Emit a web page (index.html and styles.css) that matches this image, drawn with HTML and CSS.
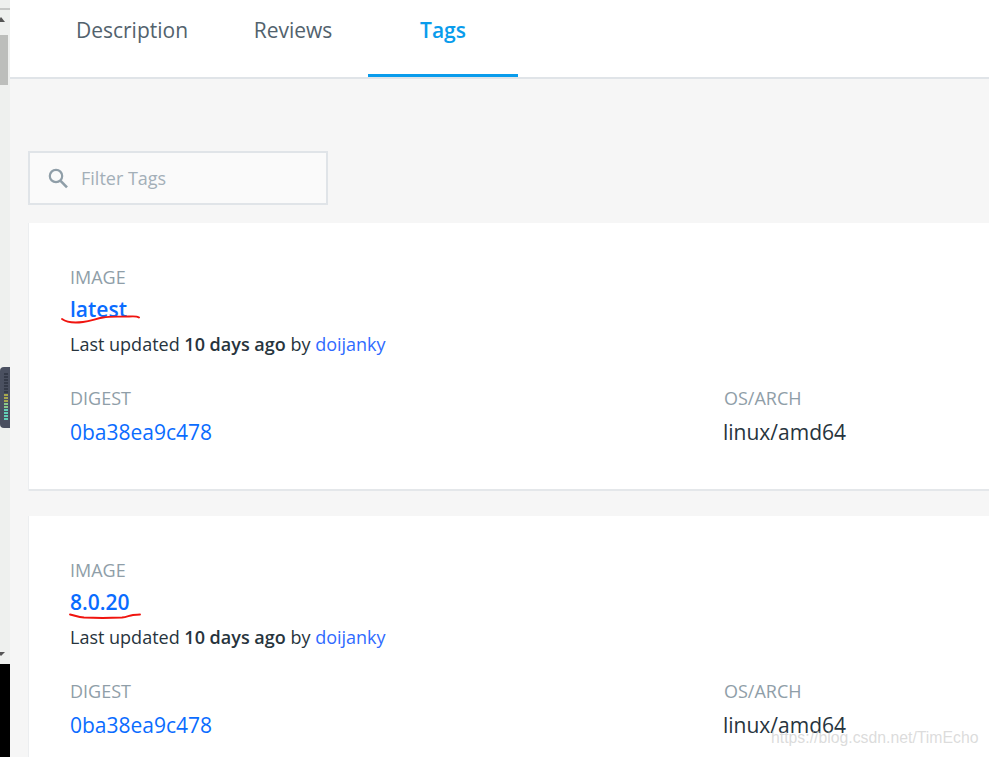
FILE: index.html
```html
<!DOCTYPE html>
<html lang="en">
<head>
<meta charset="utf-8">
<title>Tags</title>
<link rel="stylesheet" href="styles.css">
</head>
<body>
<div class="page">
  <aside class="gutter">
    <div class="track">
      <span class="arrow-up"></span>
      <span class="thumb"></span>
      <span class="arrow-down"></span>
    </div>
    <div class="black"></div>
    <div class="widget">
      <span class="bar off"></span><span class="bar off"></span><span class="bar off"></span><span class="bar off"></span><span class="bar off"></span><span class="bar off"></span><span class="bar off"></span><span class="bar y"></span><span class="bar y"></span><span class="bar y"></span><span class="bar g"></span><span class="bar g"></span><span class="bar t"></span><span class="bar t"></span><span class="bar t"></span><span class="bar t"></span>
    </div>
  </aside>
  <main class="main">
    <nav class="tabs">
      <a class="tab tab-first">Description</a>
      <a class="tab">Reviews</a>
      <a class="tab active">Tags</a>
    </nav>
    <section class="content">
      <div class="filter">
        <svg class="search" width="20" height="21" viewBox="0 0 20 21"><circle cx="8" cy="8" r="6.2" fill="none" stroke="#8f9ea8" stroke-width="2.2"/><path d="M12.6 12.8 L19 19.4" stroke="#8f9ea8" stroke-width="2.6" fill="none"/></svg>
        <span class="placeholder">Filter Tags</span>
      </div>
      <article class="card">
        <div class="label">IMAGE</div>
        <a class="tag">latest</a>
        <p class="meta">Last updated <b>10 days ago</b> by <a class="user">doijanky</a></p>
        <div class="details">
          <div>
            <div class="label">DIGEST</div>
            <a class="value link">0ba38ea9c478</a>
          </div>
          <div>
            <div class="label">OS/ARCH</div>
            <span class="value arch">linux/amd64</span>
          </div>
        </div>
        <svg class="scribble s1" width="82" height="16" viewBox="0 0 82 16"><path d="M1 9 C5 12 14 13 22 12 C30 11 34 9 42 7.500 C50 6 60 7 68 6.500 C72 6.200 76 6 78 7.500" fill="none" stroke="#f0140f" stroke-width="1.900" stroke-linecap="round"/></svg>
      </article>
      <article class="card">
        <div class="label">IMAGE</div>
        <a class="tag">8.0.20</a>
        <p class="meta">Last updated <b>10 days ago</b> by <a class="user">doijanky</a></p>
        <div class="details">
          <div>
            <div class="label">DIGEST</div>
            <a class="value link">0ba38ea9c478</a>
          </div>
          <div>
            <div class="label">OS/ARCH</div>
            <span class="value arch">linux/amd64</span>
          </div>
        </div>
        <svg class="scribble s2" width="74" height="10" viewBox="0 0 74 10"><path d="M1 2.500 C6 3.500 9 5 15 5.500 C25 6 42 6 53 5.500 C58 5 60 3.500 64 3 C67 2.700 69 2.500 71 2.500" fill="none" stroke="#f0140f" stroke-width="1.900" stroke-linecap="round"/></svg>
      </article>
    </section>
  </main>
</div>
<div class="watermark">https://blog.csdn.net/TimEcho</div>
</body>
</html>
```
FILE: styles.css
```css
* { box-sizing: border-box; }
html, body { margin: 0; height: 100%; overflow: hidden; }
body { font-family: "Open Sans", "Noto Sans", sans-serif; background: #f6f6f6; color: #27343d; }
.page { display: flex; height: 757px; position: relative; }

.gutter { width: 10px; flex: none; display: flex; flex-direction: column; background: #eef0ee; position: relative; }
.track { flex: none; height: 656px; margin-top: 8px; border-top: 2px solid #c6c8c6; display: flex; flex-direction: column; align-items: flex-start; }
.arrow-up { width: 0; height: 0; border: 4px solid transparent; border-top: 0; border-bottom: 5px solid #555; margin: 7px 0 0 -3px; }
.thumb { width: 8px; height: 50px; background: #bcbebb; margin-top: 13px; }
.arrow-down { width: 0; height: 0; border: 4px solid transparent; border-bottom: 0; border-top: 4px solid #555; margin: auto 0 8px -3px; }
.black { flex: 1; background: #000; }
.widget { position: absolute; left: 0; top: 367px; width: 10px; height: 61px; background: #4a5060; border-radius: 4px 0 0 4px; padding: 6px 2px 0 4px; display: flex; flex-direction: column; gap: 1px; }
.bar { height: 2px; flex: none; }
.bar.off { background: #343a48; }
.bar.y { background: #a8a84e; }
.bar.g { background: #8ac98a; }
.bar.t { background: #62d0b8; }

.main { flex: 1; min-width: 0; }
.tabs { display: flex; height: 79px; background: #fff; border-bottom: 2px solid #e0e4e8; padding-left: 47px; }
.tab { width: 150px; height: 77px; display: flex; align-items: center; justify-content: center; font-size: 21px; color: #52626d; padding-bottom: 17px; }
.tab-first { margin-right: 11px; }
.tab.active { color: #099cec; font-weight: 600; border-bottom: 3px solid #099cec; padding-bottom: 14px; }

.content { padding: 72px 0 0 18px; }
.filter { width: 300px; height: 54px; border: 2px solid #e0e4e8; background: #fafafa; display: flex; align-items: center; padding-left: 18px; gap: 13px; margin-bottom: 18px; }
.search { flex: none; }
.placeholder { font-size: 18px; color: #a3afb8; }

.card { position: relative; margin-left: 1px; background: #fff; height: 268px; border-bottom: 2px solid #e4e7ea; box-shadow: -1px 0 0 #eceef0; padding: 42px 0 0 41px; margin-bottom: 25px; }
.label { font-size: 18px; line-height: 24px; color: #8f9ea8; }
.tag { display: block; font-size: 21px; line-height: 30px; color: #0a6cff; font-weight: 600; margin-top: 5px; }
.meta { margin: 8px 0 0; font-size: 18px; line-height: 24px; }
.meta b { font-weight: 600; }
.user { color: #2f6bff; }
.details { display: grid; grid-template-columns: 654px 1fr; margin-top: 30px; }
.value { display: block; font-size: 21px; line-height: 30px; margin-top: 7px; }
.arch { margin-left: -1px; }
.link { color: #0a6cff; }
.scribble { position: absolute; }
.s1 { left: 32px; top: 87px; }
.s2 { left: 40px; top: 96px; }

.watermark { position: absolute; left: 771px; top: 729px; font-family: "Liberation Sans", Arial, sans-serif; font-size: 15.800px; color: rgba(190, 190, 190, 0.55); white-space: nowrap; }
```
